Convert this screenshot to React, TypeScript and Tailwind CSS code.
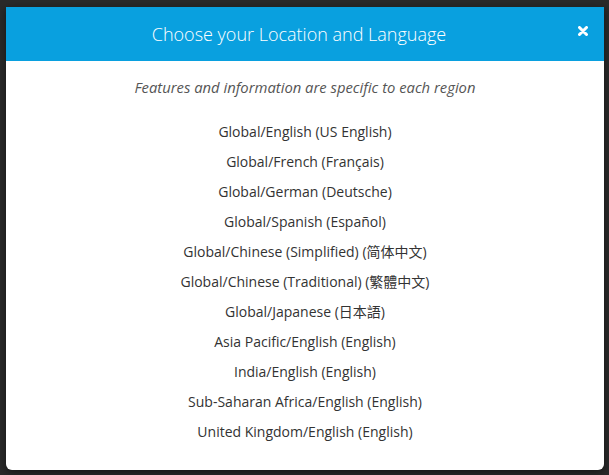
const OPTIONS = [
  'Global/English (US English)',
  'Global/French (Français)',
  'Global/German (Deutsche)',
  'Global/Spanish (Español)',
  'Global/Chinese (Simplified) (简体中文)',
  'Global/Chinese (Traditional) (繁體中文)',
  'Global/Japanese (日本語)',
  'Asia Pacific/English (English)',
  'India/English (English)',
  'Sub-Saharan Africa/English (English)',
  'United Kingdom/English (English)',
]

export default function App() {
  return (
    <div
      className="w-[609px] h-[475px] overflow-hidden bg-[#2a2a2a] pt-[7px] pl-[6px]"
      style={{ fontFamily: '"Open Sans", "Noto Sans CJK SC", sans-serif' }}
    >
      <div className="w-[598px] h-[463px] bg-white rounded-b-[6px] overflow-hidden flex flex-col shadow-[0_2px_8px_rgba(0,0,0,0.5)]">
        {/* Header */}
        <div className="relative h-[54px] shrink-0 bg-[#09a0df] flex items-center justify-center pr-[12px]">
          <h2 className="text-[18px] text-white font-light">
            Choose your Location and Language
          </h2>
          <button className="absolute right-[16px] top-[19px]">
            <svg width="10" height="10" viewBox="0 0 10 10">
              <path d="M1.5 1.5 L8.5 8.5 M8.5 1.5 L1.5 8.5" stroke="white" strokeWidth="3" strokeLinecap="round" />
            </svg>
          </button>
        </div>

        {/* Body */}
        <div className="flex flex-col items-center pt-[11px]">
          <p className="italic text-[14.8px] leading-[30px] text-[#555] mb-[15px]">
            Features and information are specific to each region
          </p>
          <ul className="flex flex-col items-center">
            {OPTIONS.map((o) => (
              <li key={o} className="text-[14px] leading-[30px] text-[#333]">
                {o}
              </li>
            ))}
          </ul>
        </div>
      </div>
    </div>
  )
}
